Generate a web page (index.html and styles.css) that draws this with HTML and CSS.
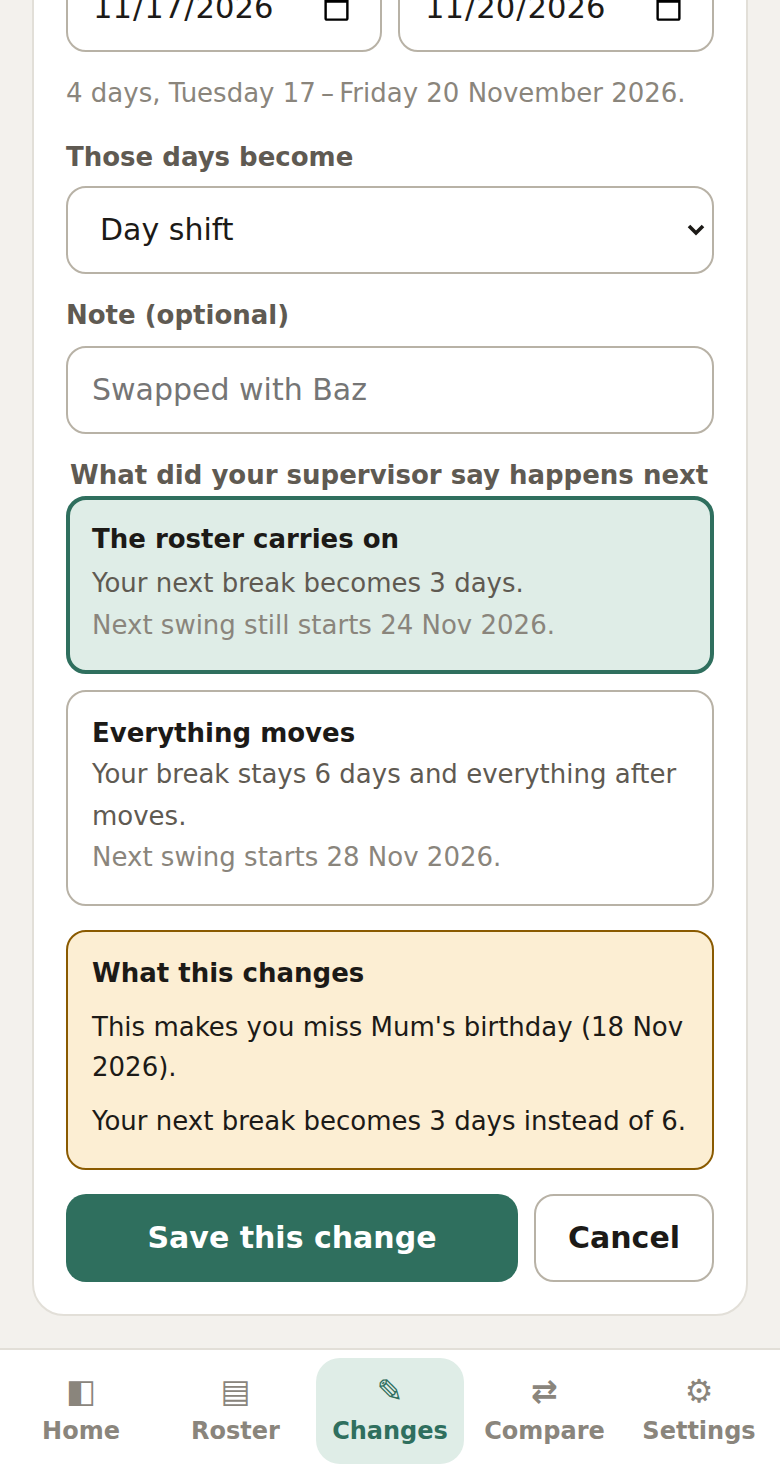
FILE: index.html
```html
<!DOCTYPE html>
<html lang="en">
<head>
    <meta charset="UTF-8">
    <meta name="viewport" content="width=device-width, initial-scale=1.0">
    <title>Changes</title>
    <link rel="stylesheet" href="styles.css">
</head>
<body>
    <div class="screen">
        <main class="content">
            <form class="card">
                <div class="date-row">
                    <input class="field date-field" type="date" value="2026-11-17">
                    <input class="field date-field" type="date" value="2026-11-20">
                </div>
                <p class="hint">4 days, Tuesday 17&#8201;&ndash;&#8201;Friday 20 November 2026.</p>

                <label class="label" for="becomes">Those days become</label>
                <select class="field select-field" id="becomes">
                    <option>Day shift</option>
                    <option>Night shift</option>
                    <option>Off</option>
                </select>

                <label class="label" for="note">Note (optional)</label>
                <input class="field" id="note" type="text" placeholder="Swapped with Baz">

                <fieldset class="choices">
                    <legend class="legend">What did your supervisor say happens next</legend>
                    <button type="button" class="choice selected">
                        <span class="choice-title">The roster carries on</span>
                        <span class="choice-text">Your next break becomes 3 days.</span>
                        <span class="choice-sub">Next swing still starts 24 Nov 2026.</span>
                    </button>
                    <button type="button" class="choice">
                        <span class="choice-title">Everything moves</span>
                        <span class="choice-text">Your break stays 6 days and everything after moves.</span>
                        <span class="choice-sub">Next swing starts 28 Nov 2026.</span>
                    </button>
                </fieldset>

                <section class="warning">
                    <h3>What this changes</h3>
                    <p>This makes you miss Mum's birthday (18 Nov 2026).</p>
                    <p>Your next break becomes 3 days instead of 6.</p>
                </section>

                <div class="actions">
                    <button type="button" class="btn btn-save">Save this change</button>
                    <button type="button" class="btn btn-cancel">Cancel</button>
                </div>
            </form>
        </main>

        <nav class="tabs">
            <a class="tab"><span class="tab-icon">&#9703;</span>Home</a>
            <a class="tab"><span class="tab-icon">&#9636;</span>Roster</a>
            <a class="tab active"><span class="tab-icon">&#9998;</span>Changes</a>
            <a class="tab"><span class="tab-icon">&#8644;</span>Compare</a>
            <a class="tab"><span class="tab-icon">&#9881;</span>Settings</a>
        </nav>
    </div>
</body>
</html>
```

FILE: styles.css
```css
* {
    box-sizing: border-box;
}
body {
    margin: 0;
    background-color: #f3f1ed;
    color: #1c1a17;
    font-family: "DejaVu Sans", sans-serif;
    font-size: 26px;
}
.screen {
    height: 100vh;
    display: flex;
    flex-direction: column;
    overflow: hidden;
}
.content {
    flex: 1;
    min-height: 0;
    display: flex;
    flex-direction: column;
    justify-content: flex-end;
    padding: 0 32px 32px;
}
.card {
    flex-shrink: 0;
    padding: 32px;
    background-color: #fff;
    border: 2px solid #e2dfd8;
    border-radius: 32px;
}
.date-row {
    display: grid;
    grid-template-columns: minmax(0, 1fr) minmax(0, 1fr);
    gap: 16px;
}
.field {
    display: block;
    width: 100%;
    height: 88px;
    padding: 0 24px;
    font-family: inherit;
    font-size: 30px;
    color: #1c1a17;
    background-color: #fff;
    border: 2px solid #b8b2a6;
    border-radius: 20px;
}
.field::placeholder {
    color: #757575;
}
.date-field {
    padding-right: 26px;
    font-size: 30.6px;
}
.select-field {
    appearance: none;
    padding-left: 32px;
    background-image: url("data:image/svg+xml,%3Csvg xmlns='http://www.w3.org/2000/svg' width='18' height='12'%3E%3Cpath d='M2 2l7 7 7-7' fill='none' stroke='%231c1a17' stroke-width='3.6'/%3E%3C/svg%3E");
    background-repeat: no-repeat;
    background-position: right 7px center;
}
.hint {
    margin: 21px 0 0;
    line-height: 40px;
    color: #8a857c;
}
.label {
    display: block;
    margin: 21px 0 11px;
    font-weight: 700;
    line-height: 40px;
    color: #5f5a52;
}
.hint + .label {
    margin: 24px 0 9px;
}
.choices {
    margin: 21px 0 0;
    padding: 0;
    border: none;
    display: flex;
    flex-direction: column;
    gap: 16px;
}
.legend {
    margin-bottom: 1px;
    padding: 0 4px;
    font-weight: 700;
    line-height: 40px;
    color: #5f5a52;
}
.choice {
    display: block;
    width: 100%;
    padding: 21px 24px 25px;
    text-align: left;
    font-family: inherit;
    font-size: 26px;
    background-color: #fff;
    border: 2px solid #b8b2a6;
    border-radius: 20px;
}
.choice span {
    display: block;
    line-height: 41.6px;
}
.choice-title {
    font-weight: 700;
    color: #1c1a17;
}
.choice-text {
    color: #5f5a52;
}
.choice-sub {
    color: #8a857c;
}
.choice.selected {
    padding: 19px 22px 23px;
    background-color: #dfede7;
    border: 4px solid #2f6f5e;
}
.selected .choice-title {
    margin-bottom: 3px;
}
.warning {
    margin-top: 24px;
    padding: 21px 24px 27px;
    background-color: #fceed3;
    border: 2px solid #8a5a00;
    border-radius: 20px;
}
.warning h3 {
    margin: 0;
    font-size: 26px;
    line-height: 40px;
}
.warning p {
    margin: 14px 0 0;
    line-height: 40px;
}
.actions {
    display: flex;
    gap: 16px;
    margin-top: 24px;
}
.btn {
    height: 88px;
    padding: 0 0 2px;
    font-family: inherit;
    font-size: 30px;
    font-weight: 700;
    border-radius: 20px;
}
.btn-save {
    flex: 1;
    color: #fff;
    background-color: #2f6f5e;
    border: none;
}
.btn-cancel {
    width: 180px;
    color: #1c1a17;
    background-color: #fff;
    border: 2px solid #b8b2a6;
}
.tabs {
    flex-shrink: 0;
    display: grid;
    grid-template-columns: repeat(5, 1fr);
    gap: 6.5px;
    height: 124px;
    padding: 8px 7px;
    background-color: #fff;
    border-top: 2px solid #e2dfd8;
}
.tab {
    display: flex;
    flex-direction: column;
    align-items: center;
    padding-top: 15px;
    font-size: 24px;
    font-weight: 700;
    color: #8a857c;
    border-radius: 24px;
}
.tab-icon {
    margin-bottom: 8px;
    font-size: 32px;
    line-height: 36px;
}
.tab.active {
    color: #2f6f5e;
    background-color: #dfede7;
}
```
